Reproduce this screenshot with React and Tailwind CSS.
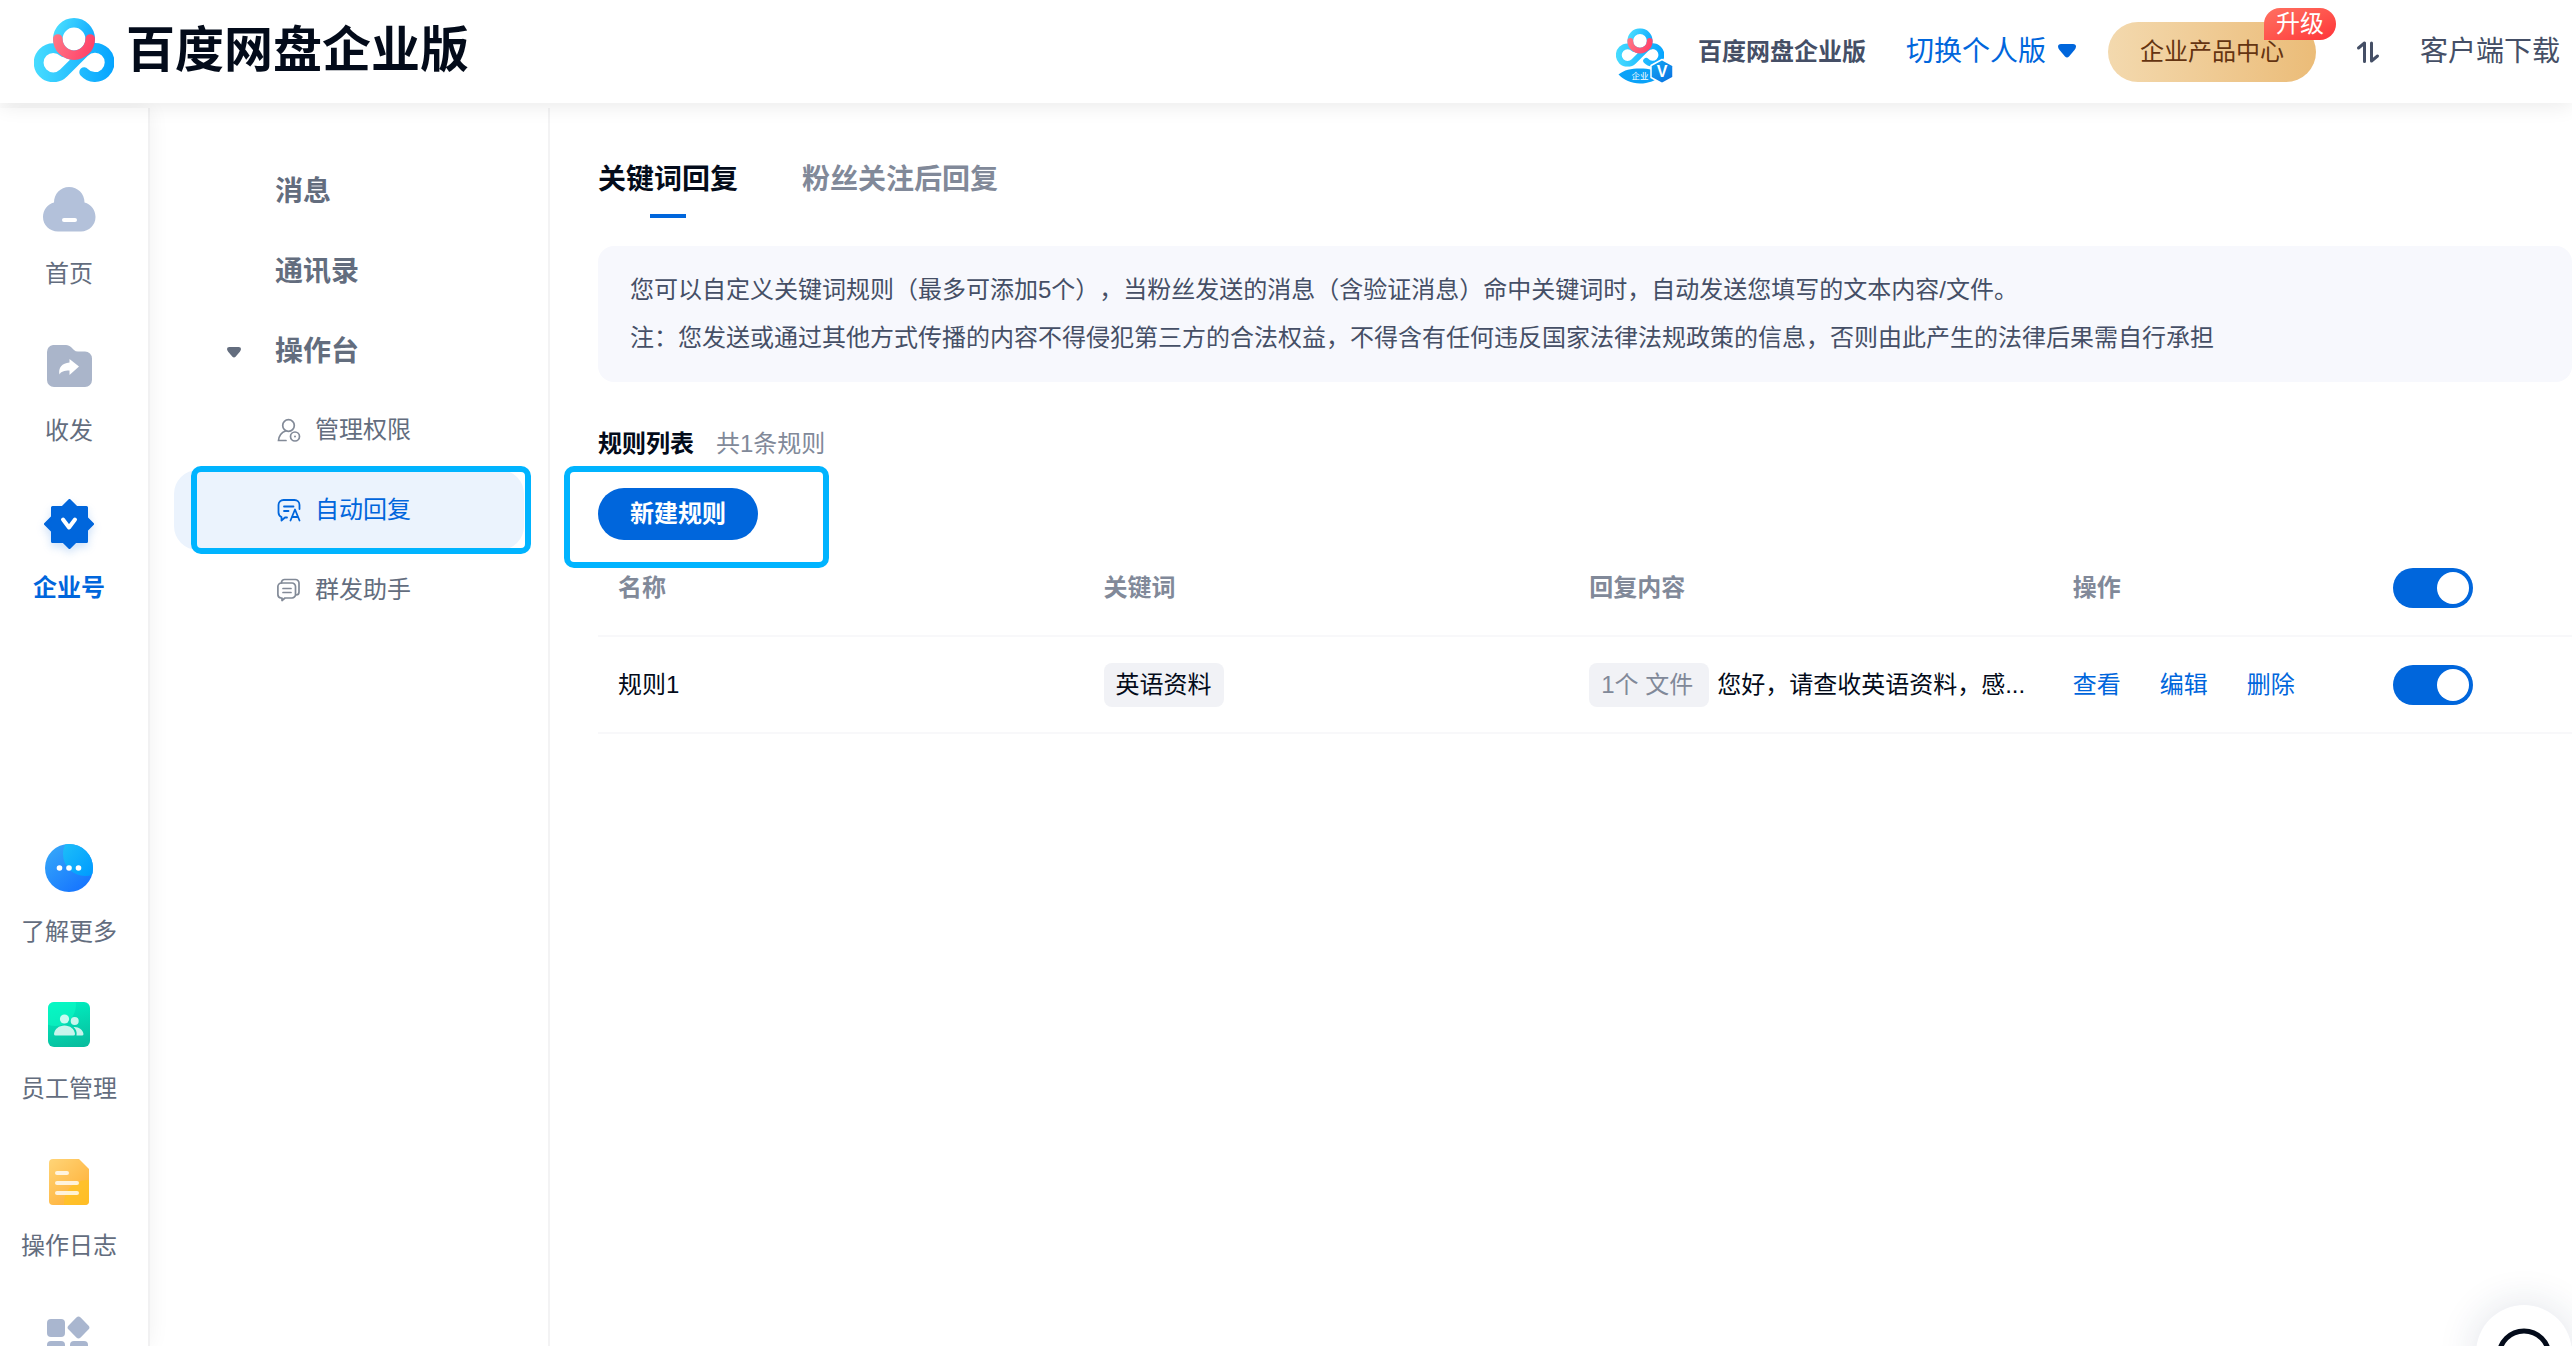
import { useState } from "react";

const railTop = [
  { id: "home", label: "首页", icon: HomeIcon },
  { id: "transfer", label: "收发", icon: FolderIcon },
  { id: "enterprise", label: "企业号", icon: EnterpriseIcon },
];

const railBottom = [
  { id: "more", label: "了解更多", icon: MoreIcon },
  { id: "staff", label: "员工管理", icon: StaffIcon },
  { id: "logs", label: "操作日志", icon: LogIcon },
  { id: "apps", icon: AppsIcon },
];

const subMenu = [
  { id: "permission", label: "管理权限", icon: PermissionIcon },
  { id: "auto", label: "自动回复", icon: AutoReplyIcon },
  { id: "group", label: "群发助手", icon: GroupSendIcon },
];

const initialRules = [
  {
    id: 1,
    name: "规则1",
    keyword: "英语资料",
    files: "1个 文件",
    reply: "您好，请查收英语资料，感...",
    enabled: true,
  },
];

function LogoMark({ id, className }) {
  return (
    <svg viewBox="0 0 80 64" fill="none" className={className} aria-hidden="true">
      <defs>
        <linearGradient id={`${id}-blue`} x1="0" y1="0" x2="80" y2="0" gradientUnits="userSpaceOnUse">
          <stop offset="0" stopColor="#47dcff" />
          <stop offset="1" stopColor="#06a4ff" />
        </linearGradient>
        <linearGradient id={`${id}-top`} x1="22" y1="10" x2="58" y2="24" gradientUnits="userSpaceOnUse">
          <stop offset="0" stopColor="#47dcff" />
          <stop offset="1" stopColor="#12aaff" />
        </linearGradient>
        <linearGradient id={`${id}-red`} x1="20" y1="20" x2="58" y2="34" gradientUnits="userSpaceOnUse">
          <stop offset="0" stopColor="#ff7585" />
          <stop offset="1" stopColor="#ff4169" />
        </linearGradient>
      </defs>
      <path
        d="M50.2 54.2A14.6 14.6 0 1 0 50.4 34.4L29.6 55A14.6 14.6 0 1 1 29.6 34.4"
        stroke={`url(#${id}-blue)`}
        strokeWidth="9.8"
        strokeLinecap="round"
      />
      <circle cx="40" cy="21" r="16.2" fill="white" stroke={`url(#${id}-top)`} strokeWidth="9.6" />
      <path
        d="M23.8 21A16.2 16.2 0 0 0 56.2 21"
        stroke={`url(#${id}-red)`}
        strokeWidth="9.6"
        strokeLinecap="round"
      />
    </svg>
  );
}

function Avatar() {
  return (
    <svg viewBox="0 0 60 64" fill="none" className="h-16 w-15" aria-hidden="true">
      <defs>
        <linearGradient id="avatar-hex" x1="38" y1="40" x2="58" y2="62" gradientUnits="userSpaceOnUse">
          <stop offset="0" stopColor="#12a9f5" />
          <stop offset="1" stopColor="#0a6fe0" />
        </linearGradient>
      </defs>
      <svg x="2" y="8" width="48" height="39" viewBox="0 0 80 64">
        <LogoMark id="avatar" />
      </svg>
      <path d="M4.500 54.500C10 50 17 48.500 26 48.500C35 48.500 42 50 48 54.500C42 61 34 63.500 26 63.500C17 63.500 10 60 4.500 54.500Z" fill="#0aa2f8" />
      <text x="17.500" y="59" fontSize="8.500" fill="white" fontFamily="Noto Sans CJK SC">
        企业
      </text>
      <path d="M48 39.500L59 45.500V57.500L48 63.500L37 57.500V45.500Z" fill="url(#avatar-hex)" stroke="white" strokeWidth="1.5" strokeLinejoin="round" />
      <text x="48" y="57" fontSize="16" fontWeight="700" textAnchor="middle" fill="white" fontFamily="Liberation Sans">
        V
      </text>
    </svg>
  );
}

function Caret({ className }) {
  return (
    <svg viewBox="0 0 18 14" fill="currentColor" className={className} aria-hidden="true">
      <path d="M3 0H15Q18 0 18 2.500Q18 4 16.500 6L11 12.500Q9 14.500 7 12.500L1.500 6Q0 4 0 2.500Q0 0 3 0Z" />
    </svg>
  );
}

function HomeIcon() {
  return (
    <svg viewBox="0 0 72 72" className="size-18" aria-hidden="true">
      <path d="M36 13C45 13 51.500 20 51.500 28.500C58 30 62.500 36 62.500 43C62.500 51 56 57.500 48 57.500H25C16.500 57.500 10 51 10 43C10 36 14.500 30 21 28.500C21 20 27.500 13 36 13Z" fill="#b3c1da" />
      <rect x="29" y="44" width="15" height="4" rx="2" fill="white" />
    </svg>
  );
}

function FolderIcon() {
  return (
    <svg viewBox="0 0 72 72" className="size-18" aria-hidden="true">
      <path d="M20 14H33C35 14 37 15 38.500 16.500L41 19Q42.500 20.500 45 20.500H52A7 7 0 0 1 59 27.500V49A7 7 0 0 1 52 56H21A7 7 0 0 1 14 49V21A7 7 0 0 1 20 14Z" fill="#aab5ca" />
      <path d="M36.500 28L46 35.500L36.500 44V39.500C31 39.500 28 40.500 26.500 43.500C25 37 29 32 36.500 31.500Z" fill="white" />
    </svg>
  );
}

function EnterpriseIcon() {
  return (
    <svg viewBox="0 0 72 72" className="size-18 drop-shadow-[0_4px_4px_rgba(0,102,220,0.2)]" aria-hidden="true">
      <g fill="#0066dc" stroke="#0066dc" strokeWidth="3" strokeLinejoin="round">
        <rect x="19.500" y="19.500" width="34" height="34" />
        <path d="M36.500 12.500L44 20H29ZM36.500 59.500L44 52H29ZM12.500 36L20 28.500V43.500ZM59.500 36L52 28.500V43.500Z" />
      </g>
      <path d="M30 31.500L36 39.500L42 31.500" fill="none" stroke="white" strokeWidth="4" strokeLinecap="round" strokeLinejoin="round" />
    </svg>
  );
}

function MoreIcon() {
  return (
    <svg viewBox="0 0 72 72" className="size-18" aria-hidden="true">
      <defs>
        <linearGradient id="more-bg" x1="16" y1="14" x2="52" y2="58" gradientUnits="userSpaceOnUse">
          <stop offset="0" stopColor="#36a8f9" />
          <stop offset="1" stopColor="#1573ff" />
        </linearGradient>
        <linearGradient id="more-fg" x1="32" y1="14" x2="60" y2="40" gradientUnits="userSpaceOnUse">
          <stop offset="0" stopColor="#1bbcf9" />
          <stop offset="1" stopColor="#009cff" />
        </linearGradient>
        <clipPath id="more-clip">
          <circle cx="36" cy="36" r="24" />
        </clipPath>
      </defs>
      <circle cx="36" cy="36" r="24" fill="url(#more-bg)" />
      <circle cx="52" cy="22" r="22" fill="url(#more-fg)" clipPath="url(#more-clip)" />
      <g fill="white">
        <circle cx="26.500" cy="36" r="2.800" />
        <circle cx="36" cy="36" r="2.800" />
        <circle cx="45.500" cy="36" r="2.800" />
      </g>
    </svg>
  );
}

function StaffIcon() {
  return (
    <svg viewBox="0 0 72 72" className="size-18" aria-hidden="true">
      <defs>
        <linearGradient id="staff-bg" x1="30" y1="13" x2="42" y2="59" gradientUnits="userSpaceOnUse">
          <stop offset="0" stopColor="#00efc0" />
          <stop offset="1" stopColor="#08bd9e" />
        </linearGradient>
        <clipPath id="staff-clip">
          <rect x="15" y="13" width="42" height="45" rx="6" />
        </clipPath>
      </defs>
      <rect x="15" y="13" width="42" height="45" rx="6" fill="url(#staff-bg)" />
      <circle cx="22" cy="16" r="21" fill="#0dffc8" fillOpacity="0.5" clipPath="url(#staff-clip)" />
      <g fill="white" fillOpacity="0.78">
        <circle cx="31.500" cy="30" r="4.600" />
        <circle cx="41.700" cy="32" r="4" />
        <path d="M21 45C21.500 40 26 36.500 31.500 36.500C37 36.500 41.500 40 42 45Q42 46.500 40.500 46.500H22.500Q21 46.500 21 45Z" />
        <path d="M40.500 38C45.500 37.500 50 40.500 50.500 45Q50.500 46.500 49 46.500H43.500C44.200 43 43 40 40.500 38Z" />
      </g>
    </svg>
  );
}

function LogIcon() {
  return (
    <svg viewBox="0 0 72 72" className="size-18" aria-hidden="true">
      <defs>
        <linearGradient id="log-bg" x1="18" y1="16" x2="54" y2="58" gradientUnits="userSpaceOnUse">
          <stop offset="0" stopColor="#ffd273" />
          <stop offset="1" stopColor="#ffac30" />
        </linearGradient>
        <clipPath id="log-clip">
          <path d="M20 13H46L56 23V55A4 4 0 0 1 52 59H20A4 4 0 0 1 16 55V17A4 4 0 0 1 20 13Z" />
        </clipPath>
      </defs>
      <g clipPath="url(#log-clip)">
        <rect x="16" y="13" width="40" height="46" fill="url(#log-bg)" />
        <circle cx="54" cy="57" r="23" fill="#ffc421" fillOpacity="0.7" />
      </g>
      <g fill="white" fillOpacity="0.8">
        <rect x="22" y="25" width="14" height="4" rx="2" />
        <rect x="22" y="35" width="24" height="4" rx="2" />
        <rect x="22" y="45" width="24" height="4" rx="2" />
      </g>
    </svg>
  );
}

function AppsIcon() {
  return (
    <svg viewBox="0 0 72 72" className="size-18" fill="#a9b6cf" aria-hidden="true">
      <rect x="14" y="16" width="18" height="18" rx="4" />
      <rect x="14" y="38" width="18" height="18" rx="4" />
      <rect x="37" y="38" width="18" height="18" rx="4" />
      <rect x="37" y="16" width="17" height="17" rx="3" transform="rotate(45 45.500 24.500)" />
    </svg>
  );
}

function PermissionIcon() {
  return (
    <svg viewBox="0 0 24 24" fill="none" stroke="currentColor" strokeWidth="1.700" strokeLinecap="round" className="size-6 opacity-80" aria-hidden="true">
      <circle cx="11.500" cy="7.500" r="5.800" />
      <path d="M8.500 13C4.500 14.500 2 17.500 1.500 22.500H9" />
      <circle cx="18" cy="18.500" r="4.500" />
      <circle cx="18" cy="18.500" r="1" fill="currentColor" stroke="none" />
    </svg>
  );
}

function AutoReplyIcon() {
  return (
    <svg viewBox="0 0 24 24" fill="none" stroke="currentColor" strokeWidth="1.800" strokeLinecap="round" strokeLinejoin="round" className="size-6" aria-hidden="true">
      <path d="M22.500 11V7A5 5 0 0 0 17.500 2H6.500A5 5 0 0 0 1.500 7V14.500A5 5 0 0 0 4.500 19V22.500L8 19.500H10" />
      <path d="M7 8.500H16.500M7 13H11.500" />
      <path d="M13.500 22.500L18 11.500L22.500 22.500M15 19H21" />
    </svg>
  );
}

function GroupSendIcon() {
  return (
    <svg viewBox="0 0 24 24" fill="none" stroke="currentColor" strokeWidth="1.700" strokeLinecap="round" strokeLinejoin="round" className="size-6 opacity-80" aria-hidden="true">
      <path d="M4.500 5V4.500A3 3 0 0 1 7.500 1.500H18.500A3.500 3.500 0 0 1 22 5V14A3 3 0 0 1 19 17" />
      <path d="M4.500 5H15A3.500 3.500 0 0 1 18.500 8.500V16.500A3.500 3.500 0 0 1 15 20H8L5 22.500V20H4A3.500 3.500 0 0 1 0.900 16.500V8.500A3.500 3.500 0 0 1 4.500 5Z" />
      <path d="M6 10.500H14M6 14.500H14" />
    </svg>
  );
}

function RailItem({ item, active, onClick }) {
  const Icon = item.icon;
  return (
    <button
      onClick={onClick}
      className={`flex shrink-0 flex-col items-center gap-3 text-2xl ${
        active ? "font-bold text-[#0066dc]" : "text-[#636d7e]"
      }`}
    >
      <Icon />
      {item.label && <span>{item.label}</span>}
    </button>
  );
}

function Toggle({ label, checked, onChange }) {
  return (
    <label className="flex h-10 w-20 cursor-pointer items-center rounded-full bg-gray-300 p-1 has-checked:justify-end has-checked:bg-[#0066dc]">
      <input
        type="checkbox"
        role="switch"
        aria-label={label}
        checked={checked}
        onChange={onChange}
        className="size-8 cursor-pointer appearance-none rounded-full bg-white"
      />
    </label>
  );
}

function Header() {
  return (
    <header className="relative z-20 flex h-[103px] shrink-0 items-center justify-between bg-white pr-3 pl-[34px] shadow-[0_2px_20px_rgba(0,0,0,0.09)]">
      <div className="flex items-center gap-3 pb-1">
        <LogoMark id="brand" className="h-16 w-20" />
        <h1 className="text-[49px] leading-[64px] font-bold text-[#030b1a]">百度网盘企业版</h1>
      </div>

      <div className="flex items-center text-2xl text-[#454f66]">
        <Avatar />
        <span className="ml-6 font-bold">百度网盘企业版</span>
        <button className="ml-10 flex items-center gap-3 text-[28px] text-[#0066dc]">
          切换个人版
          <Caret className="h-[14px] w-[18px]" />
        </button>
        <button className="relative ml-8 h-15 rounded-full bg-linear-to-r from-[#f3d9ae] to-[#ebbc78] px-8 text-[#643411]">
          企业产品中心
          <span className="absolute -top-[14px] -right-5 flex h-8 items-center rounded-t-2xl rounded-r-2xl bg-linear-to-br from-[#ff7061] to-[#ff3038] px-3 text-white">
            升级
          </span>
        </button>
        <button aria-label="传输列表" className="ml-10">
          <svg viewBox="0 0 24 24" fill="none" stroke="currentColor" strokeWidth="3" strokeLinecap="round" strokeLinejoin="round" className="size-6" aria-hidden="true">
            <path d="M2.500 8L8.500 3V21.500" />
            <path d="M15.500 3V21L21.500 16" />
          </svg>
        </button>
        <a href="#download" className="ml-10 text-[28px]">
          客户端下载
        </a>
      </div>
    </header>
  );
}

export default function App() {
  const [activeRail, setActiveRail] = useState("enterprise");
  const [activeMenu, setActiveMenu] = useState("auto");
  const [activeTab, setActiveTab] = useState("keyword");
  const [rules, setRules] = useState(initialRules);

  const allEnabled = rules.every((r) => r.enabled);

  const toggleAll = () =>
    setRules((prev) => prev.map((r) => ({ ...r, enabled: !allEnabled })));

  const toggleRule = (id) =>
    setRules((prev) =>
      prev.map((r) => (r.id === id ? { ...r, enabled: !r.enabled } : r)),
    );

  return (
    <div className="flex h-screen flex-col overflow-hidden bg-white font-['Liberation_Sans','Noto_Sans_CJK_SC',sans-serif] [text-spacing-trim:space-all]">
      <Header />

      <div className="flex min-h-0 flex-1 pt-[5px]">
        {/* Left rail */}
        <nav className="z-10 flex w-[150px] shrink-0 flex-col gap-[41px] overflow-hidden border-r-2 border-[#f1f1f2] bg-white pt-[66px] pr-2.5 shadow-[0_0_20px_rgba(0,0,0,0.06)]">
          {railTop.map((item) => (
            <RailItem
              key={item.id}
              item={item}
              active={activeRail === item.id}
              onClick={() => setActiveRail(item.id)}
            />
          ))}
          <div className="h-[146px] shrink-0" />
          {railBottom.map((item) => (
            <RailItem
              key={item.id}
              item={item}
              active={activeRail === item.id}
              onClick={() => setActiveRail(item.id)}
            />
          ))}
        </nav>

        {/* Section menu */}
        <aside className="w-[400px] shrink-0 border-r-2 border-[#f3f3f4] px-6 pt-[42px] text-[#636d7e]">
          <ul className="text-[28px] font-bold">
            <li>
              <button className="flex h-20 w-full items-center pt-1 pl-[101px]">消息</button>
            </li>
            <li>
              <button className="flex h-20 w-full items-center pt-1 pl-[101px]">通讯录</button>
            </li>
            <li>
              <button aria-expanded="true" className="flex h-20 w-full items-center gap-[34px] pt-1 pl-[53px]">
                <Caret className="h-[11px] w-[14px]" />
                操作台
              </button>
              <ul className="text-2xl font-normal">
                {subMenu.map((item) => {
                  const Icon = item.icon;
                  const active = activeMenu === item.id;
                  return (
                    <li key={item.id} className="relative">
                      <button
                        onClick={() => setActiveMenu(item.id)}
                        className={`flex h-20 w-full items-center gap-[14px] rounded-3xl pl-[103px] ${
                          active ? "bg-[#ebf3fd] text-[#0066dc]" : ""
                        }`}
                      >
                        <Icon />
                        {item.label}
                      </button>
                      {item.id === "auto" && (
                        <div className="pointer-events-none absolute -inset-y-1 -right-[7px] left-[17px] rounded-[10px] border-6 border-[#00b4ff]" />
                      )}
                    </li>
                  );
                })}
              </ul>
            </li>
          </ul>
        </aside>

        {/* Content */}
        <main className="min-w-0 flex-1 pt-[53px] pl-12 text-2xl text-[#030b1a]">
          <div role="tablist" className="flex gap-16 text-[28px] font-bold">
            {[
              ["keyword", "关键词回复"],
              ["follow", "粉丝关注后回复"],
            ].map(([id, label]) => (
              <button
                key={id}
                role="tab"
                aria-selected={activeTab === id}
                onClick={() => setActiveTab(id)}
                className={`flex h-[57px] flex-col items-center justify-between ${
                  activeTab === id ? "" : "text-[#818999]"
                }`}
              >
                {label}
                {activeTab === id && <span className="h-1 w-9 bg-[#0066dc]" />}
              </button>
            ))}
          </div>

          <div className="mt-7 rounded-2xl bg-[#f7f8fd] px-8 py-5 leading-[48px] text-[#454f66]">
            <p>
              您可以自定义关键词规则（最多可添加5个），当粉丝发送的消息（含验证消息）命中关键词时，自动发送您填写的文本内容/文件。
            </p>
            <p>
              注：您发送或通过其他方式传播的内容不得侵犯第三方的合法权益，不得含有任何违反国家法律法规政策的信息，否则由此产生的法律后果需自行承担
            </p>
          </div>

          <div className="mt-[46px] flex items-center gap-[22px]">
            <h2 className="font-bold">规则列表</h2>
            <span className="text-[#818999]">共{rules.length}条规则</span>
          </div>

          <div className="relative mt-7 w-fit">
            <button className="flex h-13 items-center rounded-full bg-[#0066dc] px-8 font-bold text-white">
              新建规则
            </button>
            <div className="pointer-events-none absolute -top-[22px] -left-[34px] h-[102px] w-[265px] rounded-[10px] border-6 border-[#00b4ff]" />
          </div>

          <table className="w-full table-fixed text-left">
            <thead>
              <tr className="h-24 border-b-2 border-[#f8f8fa] text-[#818999] *:px-5 *:font-bold">
                <th className="w-[24.6%]">名称</th>
                <th className="w-[24.6%]">关键词</th>
                <th className="w-[24.5%]">回复内容</th>
                <th className="w-[16.2%]">操作</th>
                <th>
                  <Toggle label="启用全部规则" checked={allEnabled} onChange={toggleAll} />
                </th>
              </tr>
            </thead>
            <tbody>
              {rules.map((rule) => (
                <tr key={rule.id} className="h-[97px] border-b-2 border-[#f8f8fa] *:px-5">
                  <td>{rule.name}</td>
                  <td>
                    <span className="flex h-11 w-fit items-center rounded-lg bg-[#f1f2f6] px-3">
                      {rule.keyword}
                    </span>
                  </td>
                  <td>
                    <div className="flex items-center gap-2 whitespace-nowrap">
                      <span className="flex h-11 items-center rounded-lg bg-[#f1f2f6] pr-4 pl-3 text-[#818999]">
                        {rule.files}
                      </span>
                      <span>{rule.reply}</span>
                    </div>
                  </td>
                  <td>
                    <div className="flex gap-[39px] whitespace-nowrap text-[#0066dc]">
                      <button>查看</button>
                      <button>编辑</button>
                      <button>删除</button>
                    </div>
                  </td>
                  <td>
                    <Toggle
                      label={`启用${rule.name}`}
                      checked={rule.enabled}
                      onChange={() => toggleRule(rule.id)}
                    />
                  </td>
                </tr>
              ))}
            </tbody>
          </table>
        </main>
      </div>

      {/* Support button, partly below the fold */}
      <button
        aria-label="联系客服"
        className="fixed right-0 -bottom-[55px] z-30 flex size-24 items-center justify-center rounded-full bg-white text-[#030b1a] shadow-[0_0_40px_rgba(30,50,90,0.14)]"
      >
        <svg viewBox="0 0 60 60" fill="none" stroke="currentColor" strokeWidth="5" className="size-15" aria-hidden="true">
          <circle cx="30" cy="33" r="25" />
        </svg>
      </button>
    </div>
  );
}
